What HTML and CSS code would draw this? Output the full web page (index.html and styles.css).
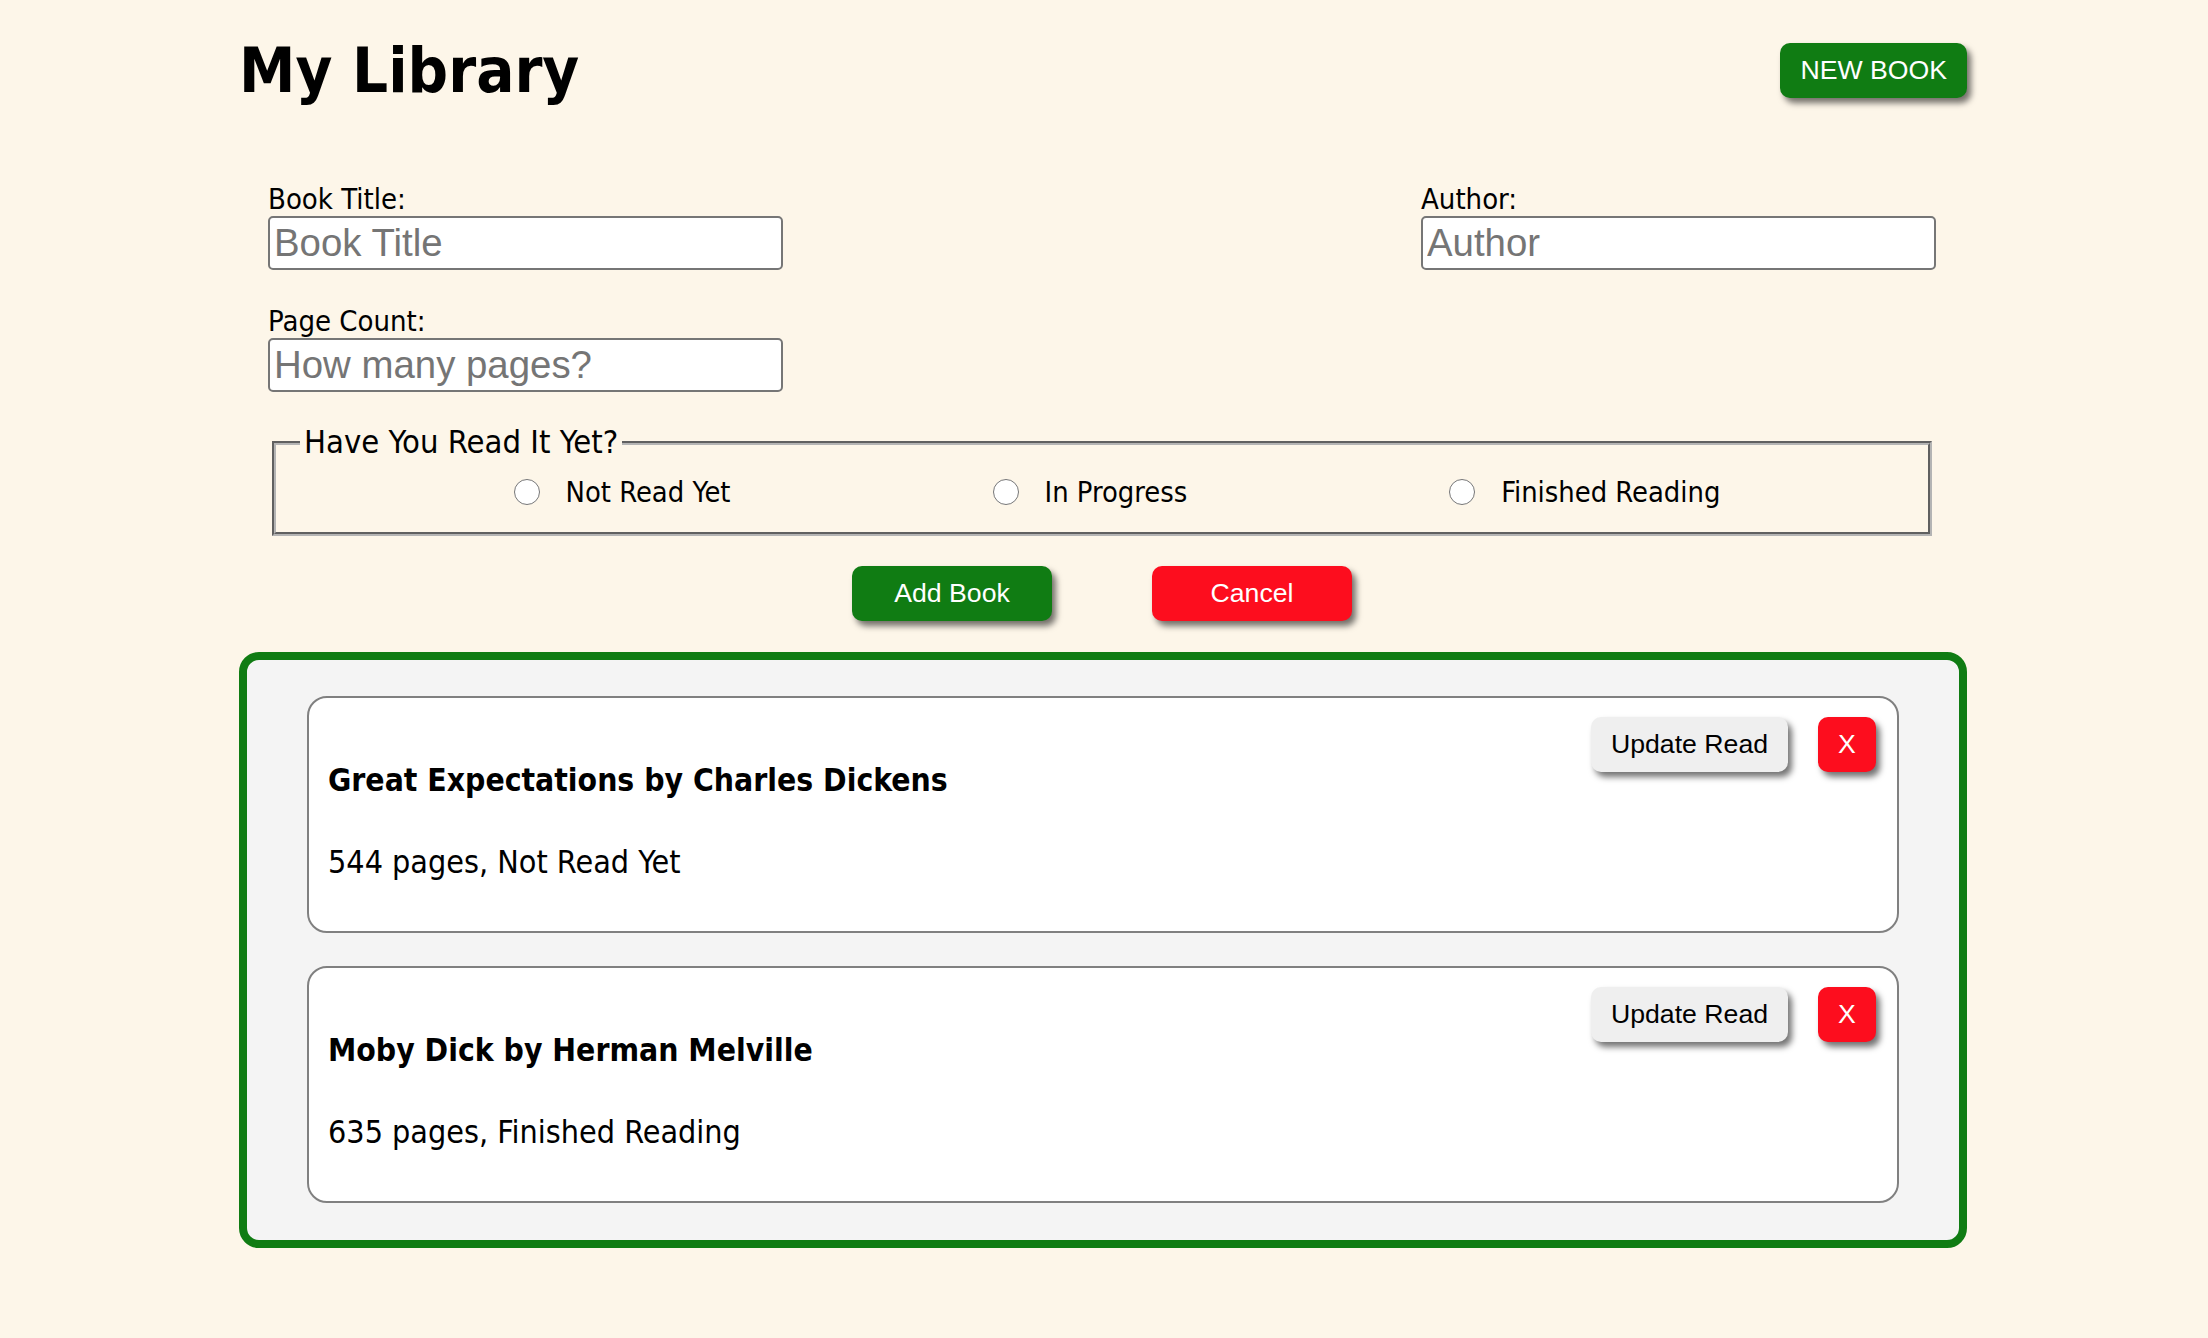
FILE: index.html
```html
<!DOCTYPE html>
<html lang="en">
<head>
<meta charset="utf-8">
<title>My Library</title>
<link rel="stylesheet" href="styles.css">
</head>
<body>
<div class="container">
  <header class="header">
    <h1 class="title">My Library</h1>
    <button class="btn btn-green btn-new">NEW BOOK</button>
  </header>

  <form class="book-form">
    <div class="form-row">
      <div class="field">
        <label class="field-label" for="title">Book Title:</label>
        <input class="field-input" id="title" type="text" placeholder="Book Title">
      </div>
      <div class="field">
        <label class="field-label" for="author">Author:</label>
        <input class="field-input" id="author" type="text" placeholder="Author">
      </div>
    </div>
    <div class="form-row form-row-second">
      <div class="field">
        <label class="field-label" for="pages">Page Count:</label>
        <input class="field-input" id="pages" type="text" placeholder="How many pages?">
      </div>
    </div>

    <fieldset class="status">
      <legend class="status-legend">Have You Read It Yet?</legend>
      <div class="radio-row">
        <label class="radio-option"><input class="radio" type="radio" name="status"><span class="radio-text">Not Read Yet</span></label>
        <label class="radio-option"><input class="radio" type="radio" name="status"><span class="radio-text">In Progress</span></label>
        <label class="radio-option"><input class="radio" type="radio" name="status"><span class="radio-text">Finished Reading</span></label>
      </div>
    </fieldset>

    <div class="form-actions">
      <button type="button" class="btn btn-green btn-action">Add Book</button>
      <button type="button" class="btn btn-red btn-action">Cancel</button>
    </div>
  </form>

  <section class="library">
    <article class="book-card">
      <div class="card-actions">
        <button class="btn btn-grey btn-update">Update Read</button>
        <button class="btn btn-red btn-remove">X</button>
      </div>
      <h3 class="book-title">Great Expectations by Charles Dickens</h3>
      <p class="book-info">544 pages, Not Read Yet</p>
    </article>
    <article class="book-card">
      <div class="card-actions">
        <button class="btn btn-grey btn-update">Update Read</button>
        <button class="btn btn-red btn-remove">X</button>
      </div>
      <h3 class="book-title">Moby Dick by Herman Melville</h3>
      <p class="book-info">635 pages, Finished Reading</p>
    </article>
  </section>
</div>
</body>
</html>
```

FILE: styles.css
```css
html, body {
  margin: 0;
  padding: 0;
}

body {
  background: #fdf6e9;
  color: #000;
  font-family: "DejaVu Sans Condensed", "DejaVu Sans", sans-serif;
  font-stretch: condensed;
  padding-top: 34px;
}

.container {
  width: 1728px;
  margin: 0 0 0 calc(50% - 865px);
}

.header {
  display: flex;
  justify-content: space-between;
  align-items: center;
  height: 74px;
}

.title {
  margin: 0;
  font-size: 63px;
  line-height: 74px;
  font-weight: bold;
}

.btn {
  font-family: "Liberation Sans", Arial, sans-serif;
  font-size: 26.67px;
  border: none;
  border-radius: 10px;
  height: 55px;
  box-shadow: 4px 5px 6px rgba(0, 0, 0, 0.55);
  cursor: pointer;
  padding: 0;
}

.btn-green {
  background: #107c13;
  color: #fff;
}

.btn-red {
  background: #fd0d1e;
  color: #fff;
}

.btn-grey {
  background: #efefef;
  color: #000;
}

.btn-new {
  padding: 0 20px;
  margin-top: -2px;
}

.book-form {
  margin: 74px 31px 0 29px;
}

.form-row {
  display: flex;
  justify-content: space-between;
}

.form-row-second {
  margin-top: 34px;
}

.field {
  width: 515px;
}

.field-label {
  display: block;
  font-size: 29px;
  line-height: 34px;
}

.field-input {
  display: block;
  box-sizing: border-box;
  width: 515px;
  height: 54px;
  margin: 0;
  border: 2px solid #767676;
  border-radius: 5px;
  padding: 0 4px;
  background: #fff;
  font-family: "Liberation Sans", Arial, sans-serif;
  font-size: 38.4px;
}

.field-input::placeholder {
  color: #757575;
}

.status {
  margin: 32px 4px 0;
  padding: 11px 24px 20px;
  border: 4px groove #b4b4b4;
  font-size: 32px;
}

.status-legend {
  padding: 0 4px;
  font-size: 32.5px;
  line-height: 37px;
}

.radio-row {
  display: flex;
  justify-content: center;
  gap: 262px;
  padding-left: 30px;
  height: 40px;
  align-items: center;
}

.radio-option {
  display: flex;
  align-items: center;
}

.radio {
  width: 26px;
  height: 26px;
  margin: 0;
}

.radio-text {
  margin-left: 26px;
  font-size: 28.8px;
}

.form-actions {
  display: flex;
  justify-content: center;
  gap: 100px;
  margin-top: 30px;
}

.btn-action {
  width: 200px;
}

.library {
  margin-top: 31px;
  border: 8px solid #107c13;
  border-radius: 20px;
  background: #f4f4f4;
  padding: 36px 60px 37px;
  display: flex;
  flex-direction: column;
  gap: 33px;
}

.book-card {
  background: #fff;
  border: 2px solid #808080;
  border-radius: 20px;
  padding: 19px 21px 19px 19px;
}

.card-actions {
  float: right;
  display: flex;
  gap: 30px;
}

.btn-update {
  width: 197px;
}

.btn-remove {
  width: 58px;
}

.book-title {
  margin: 43px 0 42px;
  font-size: 31.6px;
  line-height: 40px;
  font-weight: bold;
}

.book-info {
  margin: 0 0 30px;
  font-size: 32px;
  line-height: 40px;
}
```
